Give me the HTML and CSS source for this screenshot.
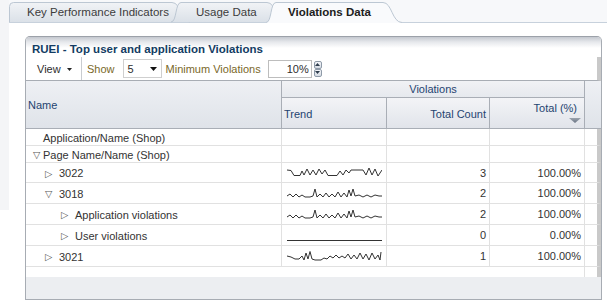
FILE: index.html
```html
<!DOCTYPE html>
<html>
<head>
<meta charset="utf-8">
<title>Violations Data</title>
<link rel="stylesheet" href="styles.css">
</head>
<body>
<svg class="defs" width="0" height="0" aria-hidden="true">
  <defs>
    <linearGradient id="tabInactive" x1="0" y1="0" x2="0" y2="1">
      <stop offset="0" stop-color="#f1f3f6"/>
      <stop offset="1" stop-color="#dbe1e8"/>
    </linearGradient>
    <linearGradient id="sortGrad" x1="0" y1="0" x2="0" y2="1">
      <stop offset="0" stop-color="#9aa3ae"/>
      <stop offset="1" stop-color="#6b7584"/>
    </linearGradient>
  </defs>
</svg>
<div class="shell">
  <div class="gutter"></div>
  <div class="main">
    <nav class="tabstrip">
      <div class="tab tab-kpi">
        <svg class="tab-shape" viewBox="0 0 181 20" preserveAspectRatio="none">
          <path class="tab-fill" d="M0.5,20 L0.5,4.5 Q0.5,0.5 4.5,0.5 L163,0.5 C172,0.5 172,20 181,20 Z"/>
          <path class="tab-line" d="M0.5,20 L0.5,4.5 Q0.5,0.5 4.5,0.5 L163,0.5 C172,0.5 172,20 181,20"/>
        </svg>
        <span>Key Performance Indicators</span>
      </div>
      <div class="tab tab-usage">
        <svg class="tab-shape" viewBox="0 0 114 20" preserveAspectRatio="none">
          <path class="tab-fill" d="M0,20 C6,20 4,0.5 10,0.5 L96,0.5 C105,0.5 105,20 114,20 Z"/>
          <path class="tab-line" d="M0,20 C6,20 4,0.5 10,0.5 L96,0.5 C105,0.5 105,20 114,20"/>
        </svg>
        <span>Usage Data</span>
      </div>
      <div class="tab tab-active">
        <svg class="tab-shape" viewBox="0 0 136 21" preserveAspectRatio="none">
          <path class="tab-fill-active" d="M0,20.5 C6,20.5 4,0.5 10,0.5 L117,0.5 C126,0.5 126,20.5 136,20.5 L136,21 L0,21 Z"/>
          <path class="tab-line" d="M0,20.5 C6,20.5 4,0.5 10,0.5 L117,0.5 C126,0.5 126,20.5 136,20.5"/>
        </svg>
        <span>Violations Data</span>
      </div>
    </nav>

    <section class="panel">
      <header class="panel-head">RUEI - Top user and application Violations</header>

      <div class="toolbar">
        <div class="view-menu">View <svg class="caret" viewBox="0 0 5 3" width="5" height="3"><path d="M0,0 L5,0 L2.5,3 Z"/></svg></div>
        <span class="label label-show">Show</span>
        <div class="select"><span>5</span><svg class="caret-sel" viewBox="0 0 7 4" width="7" height="4"><path d="M0,0 L7,0 L3.5,4 Z"/></svg></div>
        <span class="label label-min">Minimum Violations</span>
        <div class="input">10%</div>
        <div class="spinner">
          <span class="spin-btn"><svg viewBox="0 0 5 3" width="5" height="3"><path d="M0,3 L5,3 L2.5,0 Z"/></svg></span>
          <span class="spin-btn"><svg viewBox="0 0 5 3" width="5" height="3"><path d="M0,0 L5,0 L2.5,3 Z"/></svg></span>
        </div>
      </div>

      <div class="grid">
        <div class="h h-name">Name</div>
        <div class="h h-viol">Violations</div>
        <div class="h h-fill"></div>
        <div class="h h-trend">Trend</div>
        <div class="h h-count">Total Count</div>
        <div class="h h-pct"><span>Total (%)</span><svg class="sort" viewBox="0 0 12 5" width="12" height="5"><path d="M0,0 L12,0 L6,5 Z" fill="url(#sortGrad)"/></svg></div>

        <div class="c name lv-leaf">Application/Name (Shop)</div>
        <div class="c"></div><div class="c"></div><div class="c"></div><div class="c filler"></div>

        <div class="c name lv0"><span class="tw">▽</span>Page Name/Name (Shop)</div>
        <div class="c"></div><div class="c"></div><div class="c"></div><div class="c filler"></div>

        <div class="c name lv1"><span class="tw">▷</span>3022</div>
        <div class="c trend"><svg class="spark" viewBox="0 0 95 11" width="95" height="11"><polyline points="0,3 4,3.5 7,8.5 13,8.5 15,4 17,8 20,2 23,8 26,3 29,8 32,2 35,7 38,3 41,8.5 50,8.5 53,4 56,8 59,3 62,6 64,3 76,3 79,8 82,1 85,8 88,2 91,9 95,3"/></svg></div>
        <div class="c num">3</div><div class="c num pct">100.00%</div><div class="c filler"></div>

        <div class="c name lv1"><span class="tw">▽</span>3018</div>
        <div class="c trend"><svg class="spark" viewBox="0 0 95 11" width="95" height="11"><polyline points="0,8 3,6 6,9 9,6 12,9 15,7 18,9 23,9 26,8 28,1 30,9 33,6 36,9 39,5 42,9 45,6 48,9 51,4 54,9 57,5 60,9 62,2 64,8 66,1 68,8 72,7 76,9 80,7 84,9 88,7 92,8 95,8"/></svg></div>
        <div class="c num">2</div><div class="c num pct">100.00%</div><div class="c filler"></div>

        <div class="c name lv2"><span class="tw">▷</span>Application violations</div>
        <div class="c trend"><svg class="spark" viewBox="0 0 95 11" width="95" height="11"><polyline points="0,8 3,6 6,9 9,6 12,9 15,7 18,9 23,9 26,8 28,1 30,9 33,6 36,9 39,5 42,9 45,6 48,9 51,4 54,9 57,5 60,9 62,2 64,8 66,1 68,8 72,7 76,9 80,7 84,9 88,7 92,8 95,8"/></svg></div>
        <div class="c num">2</div><div class="c num pct">100.00%</div><div class="c filler"></div>

        <div class="c name lv2"><span class="tw">▷</span>User violations</div>
        <div class="c trend"><svg class="spark" viewBox="0 0 95 11" width="95" height="11"><polyline points="0,10.5 95,10.5"/></svg></div>
        <div class="c num">0</div><div class="c num pct">0.00%</div><div class="c filler"></div>

        <div class="c name lv1"><span class="tw">▷</span>3021</div>
        <div class="c trend"><svg class="spark" viewBox="0 0 95 11" width="95" height="11"><polyline points="0,5 4,6 8,8 12,8 15,5 17,9 19,2 21,8 23,0.5 25,8 28,9 34,9 37,7 40,8 43,5 46,7 49,4 52,7 55,5 58,7 61,3 64,8 67,4 70,8 73,2 76,8 79,3 82,9 85,2 88,8 91,4 93,9 94,1"/></svg></div>
        <div class="c num">1</div><div class="c num pct">100.00%</div><div class="c filler"></div>

        <div class="s"></div><div class="s"></div><div class="s"></div><div class="s s-pct"></div><div class="s filler"></div>
      </div>

      <div class="panel-foot"></div>
    </section>
  </div>
</div>
</body>
</html>
```

FILE: styles.css
```css
html, body {
  margin: 0;
  padding: 0;
}

body {
  background: #ffffff;
  font-family: "Liberation Sans", Arial, sans-serif;
  font-size: 11px;
  color: #333333;
  width: 607px;
  height: 304px;
  overflow: hidden;
}

.defs {
  position: absolute;
  width: 0;
  height: 0;
}

.shell {
  display: flex;
  height: 304px;
}

.gutter {
  flex: none;
  width: 9px;
  height: 210px;
  background: #f4f5f7;
}

.main {
  flex: 1;
  display: flex;
  flex-direction: column;
  min-width: 0;
}

/* ---------- tabs ---------- */
.tabstrip {
  height: 23px;
  box-sizing: border-box;
  border-bottom: 1px solid #c7d1dc;
  background: #f7f8fa;
  display: flex;
  align-items: flex-end;
}

.tab {
  position: relative;
  flex: none;
  box-sizing: border-box;
  height: 20px;
  padding-top: 3px;
  line-height: 14px;
  font-size: 11.5px;
  color: #3c3c3c;
  white-space: nowrap;
}

.tab span {
  position: relative;
}

.tab-shape {
  position: absolute;
  left: 0;
  top: 0;
  width: 100%;
  height: 100%;
  overflow: visible;
}

.tab-fill {
  fill: url(#tabInactive);
}

.tab-fill-active {
  fill: #f9fafc;
}

.tab-line {
  fill: none;
  stroke: #bcc7d3;
  stroke-width: 1;
}

.tab-kpi {
  width: 181px;
  padding-left: 18px;
  z-index: 1;
}

.tab-usage {
  width: 114px;
  margin-left: -19px;
  padding-left: 25px;
  z-index: 2;
}

.tab-active {
  width: 136px;
  height: 21px;
  margin-left: -19px;
  margin-bottom: -1px;
  padding-left: 22px;
  font-weight: bold;
  color: #202020;
  z-index: 3;
}

/* ---------- panel ---------- */
.panel {
  margin: 13px 0 0 16px;
  width: 577px;
  height: 264px;
  box-sizing: border-box;
  border: 1px solid #a7acb3;
  border-top-color: #9ca1a9;
  border-radius: 5px 5px 0 0;
  display: flex;
  flex-direction: column;
  overflow: hidden;
  background: #ffffff;
}

.panel-head {
  flex: none;
  height: 20px;
  box-sizing: border-box;
  padding: 6px 0 0 6px;
  line-height: 13px;
  background: linear-gradient(#c4c8cf 0, #e6e8ec 5px, #ffffff 11px);
  font-weight: bold;
  font-size: 11.5px;
  color: #123c63;
  white-space: nowrap;
}

/* ---------- toolbar ---------- */
.toolbar {
  flex: none;
  height: 24px;
  box-sizing: border-box;
  border-bottom: 1px solid #a8adb4;
  border-right: 4px solid #c9c9c9;
  display: flex;
  align-items: center;
  white-space: nowrap;
}

.view-menu {
  align-self: stretch;
  width: 56px;
  box-sizing: border-box;
  border-right: 1px solid #c9ccd0;
  padding-left: 11px;
  display: flex;
  align-items: center;
  gap: 6px;
  color: #2e2e2e;
}

.caret {
  fill: #222222;
  margin-top: 1px;
}

.label {
  color: #7a6829;
}

.label-show {
  margin-left: 5px;
}

.select {
  margin-left: 8px;
  width: 39px;
  height: 19px;
  box-sizing: border-box;
  border: 1px solid #cfcfcf;
  background: #ffffff;
  display: flex;
  align-items: center;
  justify-content: space-between;
  padding: 0 4px 0 4px;
  color: #2e2e2e;
}

.caret-sel {
  fill: #111111;
}

.label-min {
  margin-left: 4px;
}

.input {
  margin-left: 7px;
  width: 44px;
  height: 18px;
  box-sizing: border-box;
  border: 1px solid #bdbdbd;
  background: #ffffff;
  text-align: right;
  padding-right: 2px;
  line-height: 16px;
  color: #2e2e2e;
}

.spinner {
  margin-left: 2px;
  width: 8px;
  height: 16px;
  display: flex;
  flex-direction: column;
  gap: 0;
}

.spin-btn {
  flex: 1;
  box-sizing: border-box;
  border: 1px solid #8e9aa8;
  border-radius: 2px;
  background: linear-gradient(#f4f6f9, #d5dbe3);
  display: flex;
  align-items: center;
  justify-content: center;
}

.spin-btn svg {
  fill: #2f3d4d;
}

/* ---------- grid ---------- */
.grid {
  flex: none;
  display: grid;
  grid-template-columns: 256px 105px 103px 95px 16px;
  grid-template-rows: 17px 31px 17px 17px 20px 21px 21px 21px 21px 10px;
}

.h {
  box-sizing: border-box;
  background: linear-gradient(#f3f4f7, #e1e4ea);
  border-right: 1px solid #a9aeb6;
  border-bottom: 1px solid #a9aeb6;
  color: #1f4470;
  white-space: nowrap;
  line-height: 13px;
}

.h-name {
  grid-column: 1;
  grid-row: 1 / span 2;
  display: flex;
  align-items: center;
  padding: 2px 0 0 2px;
  background: linear-gradient(#eef0f4, #dfe3e9);
}

.h-viol {
  grid-column: 2 / span 3;
  grid-row: 1;
  text-align: center;
  padding-top: 2px;
  background: linear-gradient(#f1f2f5, #e6e9ee);
}

.h-fill {
  grid-column: 5;
  grid-row: 1 / span 2;
  border-right: none;
  background: linear-gradient(#eef0f4, #dfe3e9);
}

.h-trend {
  grid-column: 2;
  grid-row: 2;
  display: flex;
  align-items: flex-end;
  padding: 0 0 7px 2px;
}

.h-count {
  grid-column: 3;
  grid-row: 2;
  display: flex;
  align-items: flex-end;
  justify-content: flex-end;
  padding: 0 3px 7px 0;
}

.h-pct {
  grid-column: 4;
  grid-row: 2;
  display: flex;
  flex-direction: column;
  align-items: flex-end;
  padding: 4px 3px 0 0;
}

.h-pct span {
  padding-right: 4px;
}

.sort {
  margin-top: 3px;
}

.c {
  box-sizing: border-box;
  border-right: 1px solid #e1e1e1;
  border-bottom: 1px solid #e1e1e1;
  display: flex;
  align-items: center;
  white-space: nowrap;
  color: #333333;
}

.name {
  padding-top: 1px;
}

.lv-leaf { padding-left: 17px; }
.lv0 { padding-left: 7px; }
.lv1 { padding-left: 19px; }
.lv2 { padding-left: 35px; }

.tw {
  display: inline-block;
  font-family: "DejaVu Sans", sans-serif;
  font-size: 9.5px;
  color: #555555;
  width: 14px;
}

.lv0 .tw { width: 10px; }

.trend {
  padding-left: 5px;
}

.spark {
  fill: none;
  stroke: #333333;
  stroke-width: 1;
  stroke-linejoin: miter;
}

.num {
  justify-content: flex-end;
  padding-right: 3px;
  color: #333333;
}

.pct {
  padding-right: 3px;
}

.filler {
  border-right: 4px solid #c9c9c9;
}

.s {
  box-sizing: border-box;
}

.s-pct {
  border-right: 1px solid #e1e1e1;
}

.panel-foot {
  flex: 1;
  background: #eceef1;
}
```
